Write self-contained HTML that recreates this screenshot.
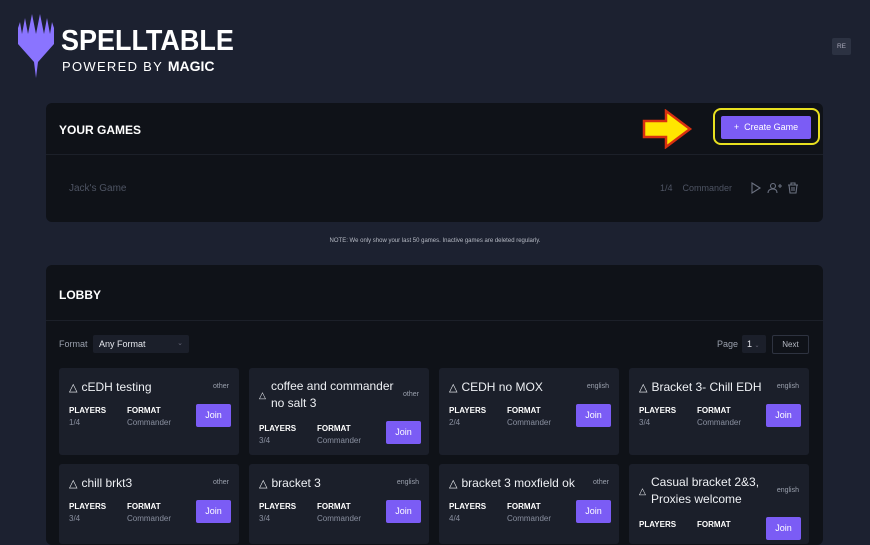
<!DOCTYPE html>
<html><head><style>
*{box-sizing:border-box;margin:0;padding:0}
body{width:870px;height:529px;overflow:hidden;background:#1c2130;font-family:"Liberation Sans",sans-serif;color:#e6e8ee;position:relative}
.abs{position:absolute}
.panel{position:absolute;left:46px;width:777px;background:#0f1218;border-radius:6px}
.h{font-weight:bold;font-size:12px;color:#fff}
.line{position:absolute;left:0;right:0;height:1px;background:#1c2029}
.card{position:absolute;width:180px;background:#1b1f2a;border-radius:3px}
.t{position:absolute;left:10px;top:11px;font-size:12px;color:#eef0f4;line-height:17px}
.tag{position:absolute;right:10px;font-size:7px;color:#9aa0ad}
.lbl{position:absolute;font-size:8px;font-weight:bold;color:#fff}
.val{position:absolute;font-size:8px;color:#8a90a0}
.join{position:absolute;left:137px;width:35px;height:23px;background:#7b5cf5;border-radius:2px;color:#fff;font-size:9px;text-align:center;line-height:23px}
.tri{font-size:11px;margin-right:4px}
</style></head><body>
<svg class="abs" style="left:16px;top:14px" width="40" height="64" viewBox="0 0 40 64">
<path d="M2 14 L4 8 L6 20 L9 4 L12 20 L16 0 L20 20 L24 0 L28 20 L31 4 L34 20 L36 8 L38 14 L38 30 L22 48 L20 64 L18 48 L2 30 Z" fill="#8a74ff"/>
</svg>
<div class="abs" style="left:61px;top:25px;font-size:29px;font-weight:bold;color:#fff;line-height:32px;transform:scaleX(0.93);transform-origin:left">SPELLTABLE</div>
<div class="abs" style="left:62px;top:58px;font-size:13px;color:#fff;letter-spacing:1.3px">POWERED BY <b style="font-size:14px;letter-spacing:0">MAGIC</b></div>
<div class="abs" style="left:832px;top:38px;width:19px;height:17px;background:#2c3242;border-radius:2px;font-size:6.5px;color:#aab;text-align:center;line-height:17px">RE</div>

<div class="panel" style="top:103px;height:119px">
 <div class="h abs" style="left:13px;top:20px">YOUR GAMES</div>
 <div class="line" style="top:51px"></div>
 <div class="abs" style="left:23px;top:80px;font-size:10px;color:#4e5463">Jack's Game</div>
 <div class="abs" style="left:614px;top:80px;font-size:9px;color:#4e5463">1/4 &nbsp;&nbsp; Commander</div>
 <svg class="abs" style="left:704px;top:79px" width="52" height="12" viewBox="0 0 52 12" fill="none" stroke="#6b7180" stroke-width="1.1">
  <path d="M2 1 L10 6 L2 11 Z"/><circle cx="23" cy="4" r="2.5"/><path d="M18 11 Q18 7 23 7 Q27 7 27 11 M28 4h4M30 2v4"/>
  <path d="M38 3h10M41 3V1h4v2M39 3l1 8h6l1-8M42 5v4M44 5v4"/>
 </svg>
 <div class="abs" style="left:667px;top:5px;width:107px;height:37px;border:2.5px solid #e8e020;border-radius:8px"></div>
 <div class="abs" style="left:675px;top:13px;width:90px;height:23px;background:#7b5cf5;border-radius:2px;color:#fff;font-size:9px;text-align:center;line-height:23px">+&nbsp;&nbsp;Create Game</div>
 <svg class="abs" style="left:596px;top:6px" width="52" height="40" viewBox="0 0 52 40"><path d="M2 12 H24 V2 L48 20 L24 38 V28 H2 Z" fill="#ffe600" stroke="#d83010" stroke-width="2.5"/></svg>
</div>
<div class="abs" style="left:0;width:870px;top:238px;text-align:center;font-size:6px;color:#b6bac4">NOTE: We only show your last 50 games. Inactive games are deleted regularly.</div>

<div class="panel" style="top:265px;height:280px">
 <div class="h abs" style="left:13px;top:23px">LOBBY</div>
 <div class="line" style="top:55px"></div>
 <div class="abs" style="left:13px;top:74px;font-size:9px;color:#9aa0ad">Format</div>
 <div class="abs" style="left:47px;top:70px;width:96px;height:18px;background:#1b1f2a;border-radius:2px;font-size:9px;color:#e6e8ee;padding:4px 6px">Any Format<span style="float:right;color:#667;font-size:7px">⌄</span></div>
 <div class="abs" style="left:671px;top:74px;font-size:9px;color:#9aa0ad">Page</div>
 <div class="abs" style="left:696px;top:70px;width:24px;height:18px;background:#1b1f2a;border-radius:2px;font-size:9px;padding:4px 5px">1 <span style="color:#667;font-size:6px">⌄</span></div>
 <div class="abs" style="left:726px;top:70px;width:37px;height:19px;border:1px solid #2e3340;border-radius:2px;font-size:8px;color:#b6bac4;text-align:center;line-height:17px">Next</div>
</div>

<div class="card" style="left:59px;top:368px;height:87px"><div class="t"><span class="tri">△</span>cEDH testing</div><div class="tag" style="top:15px">other</div>
<div class="lbl" style="left:10px;top:38px">PLAYERS</div><div class="val" style="left:10px;top:50px">1/4</div><div class="lbl" style="left:68px;top:38px">FORMAT</div><div class="val" style="left:68px;top:50px">Commander</div><div class="join" style="top:36px">Join</div></div>
<div class="card" style="left:249px;top:368px;height:87px"><div class="t" style="top:10px;padding-left:12px"><span class="tri" style="position:absolute;left:0;top:9px;font-size:9px">△</span>coffee and commander<br>no salt 3</div><div class="tag" style="top:23px">other</div>
<div class="lbl" style="left:10px;top:56px">PLAYERS</div><div class="val" style="left:10px;top:68px">3/4</div><div class="lbl" style="left:68px;top:56px">FORMAT</div><div class="val" style="left:68px;top:68px">Commander</div><div class="join" style="top:53px">Join</div></div>
<div class="card" style="left:439px;top:368px;height:87px"><div class="t"><span class="tri">△</span>CEDH no MOX</div><div class="tag" style="top:15px">english</div>
<div class="lbl" style="left:10px;top:38px">PLAYERS</div><div class="val" style="left:10px;top:50px">2/4</div><div class="lbl" style="left:68px;top:38px">FORMAT</div><div class="val" style="left:68px;top:50px">Commander</div><div class="join" style="top:36px">Join</div></div>
<div class="card" style="left:629px;top:368px;height:87px"><div class="t"><span class="tri">△</span>Bracket 3- Chill EDH</div><div class="tag" style="top:15px">english</div>
<div class="lbl" style="left:10px;top:38px">PLAYERS</div><div class="val" style="left:10px;top:50px">3/4</div><div class="lbl" style="left:68px;top:38px">FORMAT</div><div class="val" style="left:68px;top:50px">Commander</div><div class="join" style="top:36px">Join</div></div>
<div class="card" style="left:59px;top:464px;height:80px"><div class="t"><span class="tri">△</span>chill brkt3</div><div class="tag" style="top:15px">other</div>
<div class="lbl" style="left:10px;top:38px">PLAYERS</div><div class="val" style="left:10px;top:50px">3/4</div><div class="lbl" style="left:68px;top:38px">FORMAT</div><div class="val" style="left:68px;top:50px">Commander</div><div class="join" style="top:36px">Join</div></div>
<div class="card" style="left:249px;top:464px;height:80px"><div class="t"><span class="tri">△</span>bracket 3</div><div class="tag" style="top:15px">english</div>
<div class="lbl" style="left:10px;top:38px">PLAYERS</div><div class="val" style="left:10px;top:50px">3/4</div><div class="lbl" style="left:68px;top:38px">FORMAT</div><div class="val" style="left:68px;top:50px">Commander</div><div class="join" style="top:36px">Join</div></div>
<div class="card" style="left:439px;top:464px;height:80px"><div class="t"><span class="tri">△</span>bracket 3 moxfield ok</div><div class="tag" style="top:15px">other</div>
<div class="lbl" style="left:10px;top:38px">PLAYERS</div><div class="val" style="left:10px;top:50px">4/4</div><div class="lbl" style="left:68px;top:38px">FORMAT</div><div class="val" style="left:68px;top:50px">Commander</div><div class="join" style="top:36px">Join</div></div>
<div class="card" style="left:629px;top:464px;height:80px"><div class="t" style="top:10px;padding-left:12px"><span class="tri" style="position:absolute;left:0;top:9px;font-size:9px">△</span>Casual bracket 2&amp;3,<br>Proxies welcome</div><div class="tag" style="top:23px">english</div>
<div class="lbl" style="left:10px;top:56px">PLAYERS</div><div class="lbl" style="left:68px;top:56px">FORMAT</div><div class="join" style="top:53px">Join</div></div>
</body></html>
